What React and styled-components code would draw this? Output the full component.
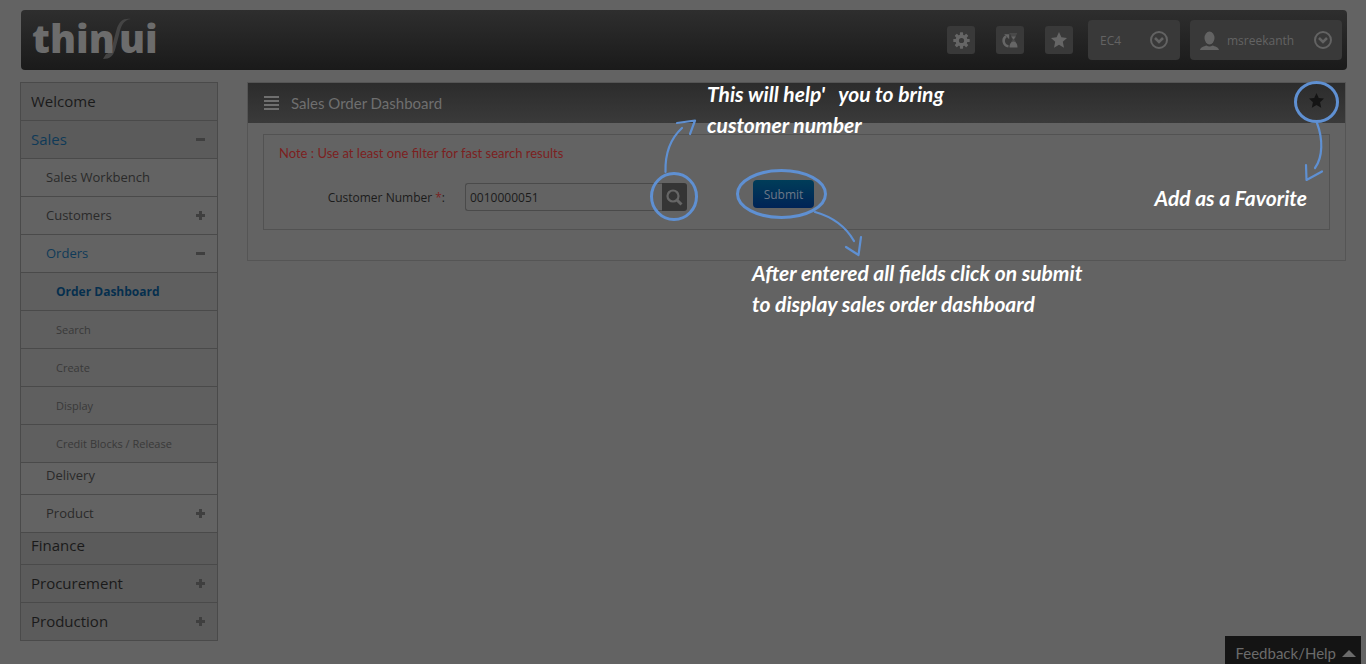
import React from "react";
import styled, { createGlobalStyle, css } from "styled-components";

const UI = '"Open Sans", "Noto Sans", sans-serif';
const HEADING = 'Lato, "Liberation Sans", sans-serif';
const INK = "#5f90d2";

const GlobalStyle = createGlobalStyle`
  * { box-sizing: border-box; }
  body { margin: 0; background: #636363; font-family: ${UI}; color: #1b1b1b; }
  button, input, select { font-family: inherit; }
  ul { list-style: none; margin: 0; padding: 0; }
`;

const Page = styled.div`
  padding: 10px 20px 20px;
`;

const TopBar = styled.header`
  display: flex;
  align-items: center;
  height: 60px;
  margin: 0 -1px 0 1px;
  padding: 0 5px 0 11px;
  border-radius: 4px;
  background: linear-gradient(#2e2e2e, #1a1a1a);
`;

const Logo = styled.a`
  display: flex;
  align-items: center;
  isolation: isolate;
  margin-right: auto;
  padding-bottom: 4px;
  color: #6c6c6c;
  font: 800 39px/44px ${UI};
  text-decoration: none;
`;

const Slash = styled.svg`
  z-index: -1;
  margin: 0 -12px;
`;

const IconGroup = styled.div`
  display: flex;
  gap: 21px;
  margin-right: 15px;
`;

const IconButton = styled.button`
  display: grid;
  place-items: center;
  width: 28px;
  height: 28px;
  padding: 0;
  border: 0;
  border-radius: 3px;
  background: #393939;
  color: #666;
`;

const Picker = styled.button`
  display: flex;
  align-items: center;
  gap: 8px;
  width: ${(p) => p.$width};
  height: 40px;
  margin-left: ${(p) => p.$gap || "0"};
  padding: 0 ${(p) => p.$pad};
  border: 0;
  border-radius: 4px;
  background: #393939;
  color: #636363;
  font-size: 12px;
`;

const PickerText = styled.span`
  margin-right: auto;
`;

const Columns = styled.div`
  display: flex;
  align-items: flex-start;
  gap: 29px;
  padding-top: 12px;
`;

const Sidebar = styled.nav`
  flex: 0 0 198px;
  border: 1px solid #4a4a4a;
  border-top: 0;
`;

const levels = {
  1: css`padding-left: 10px; font-size: 15px; color: #1a1a1a; background: #5b5b5b;`,
  2: css`padding-left: 25px; font-size: 13px; color: #2a2a2a; background: #636363;`,
  3: css`padding-left: 35px; font-size: 11px; color: #393939; background: #5f5f5f;`,
};

const NavLink = styled.a`
  display: flex;
  align-items: center;
  justify-content: space-between;
  height: ${(p) => (p.$short ? "32px" : "38px")};
  padding-right: 12px;
  padding-bottom: ${(p) => (p.$short ? "7px" : "1px")};
  border-top: 1px solid #4a4a4a;
  text-decoration: none;
  ${(p) => levels[p.$level]}
  ${(p) => p.$open && css`color: #0f3a58;`}
  ${(p) => p.$current && css`color: #062f4e; font-size: 12px; font-weight: 700;`}
`;

const Panel = styled.main`
  flex: 1;
  min-width: 0;
  border: 1px solid #555;
`;

const PanelHeader = styled.div`
  display: flex;
  align-items: center;
  gap: 12px;
  height: 40px;
  padding: 0 16px;
  background: linear-gradient(#2c2c2c, #3a3a3a);
  color: #6f6f6f;
`;

const PanelTitle = styled.h1`
  margin: 0 auto 0 0;
  font: 400 15px/24px ${HEADING};
`;

const StarButton = styled.button`
  display: grid;
  place-items: center;
  width: 24px;
  height: 24px;
  padding: 0 1px 6px 0;
  border: 0;
  background: none;
  color: #141414;
`;

const Filters = styled.form`
  margin: 11px 15px 30px;
  padding: 8px 15px 13px;
  border: 1px solid #525252;
`;

const Note = styled.p`
  margin: 0 0 15px;
  color: #7c1f1f;
  font: 400 13px/20px ${HEADING};
`;

const FieldRow = styled.div`
  display: flex;
  align-items: center;
  height: 38px;
`;

const Label = styled.label`
  width: 186px;
  padding-right: 20px;
  font-size: 12px;
  text-align: right;
`;

const Required = styled.span`
  color: #7c1f1f;
`;

const TextInput = styled.input`
  width: 197px;
  height: 28px;
  padding: 0 4px;
  border: 1px solid #4a4a4a;
  border-right: 0;
  border-radius: 3px 0 0 3px;
  background: #636363;
  color: #1b1b1b;
  font-size: 12px;
`;

const SearchButton = styled.button`
  display: grid;
  place-items: center;
  width: 25px;
  height: 28px;
  padding: 0;
  border: 0;
  border-radius: 0 3px 3px 0;
  background: #353535;
  color: #666;
`;

const SubmitButton = styled.button`
  width: 61px;
  height: 28px;
  padding: 0;
  border: 0;
  border-radius: 4px;
  background: linear-gradient(#003d59, #002356);
  color: #6d7887;
  font-size: 12px;
`;

/* Keeps a guide callout attached to the control it explains. */
const Anchor = styled.div`
  position: relative;
  display: flex;
  margin-left: ${(p) => p.$gap || "0"};
  padding-bottom: ${(p) => p.$lift || "0"};
`;

const Sketch = styled.svg`
  position: absolute;
  left: ${(p) => p.$x};
  top: ${(p) => p.$y};
  z-index: 2;
  fill: none;
  stroke: ${INK};
  stroke-linecap: round;
  stroke-linejoin: round;
  pointer-events: none;
`;

const Hint = styled.p`
  position: absolute;
  left: ${(p) => p.$x};
  right: ${(p) => p.$right};
  top: ${(p) => p.$y};
  z-index: 2;
  margin: 0;
  color: #fff;
  font: italic 700 21px/31px ${HEADING};
  white-space: pre;
  pointer-events: none;
`;

const Feedback = styled.button`
  position: fixed;
  right: 5px;
  bottom: 0;
  display: flex;
  align-items: center;
  gap: 6px;
  height: 28px;
  padding: 6px 5px 0 10px;
  border: 0;
  background: #141414;
  color: #6b6b6b;
  && { font: 400 15px/22px ${HEADING}; }
`;

const Star = ({ size }) => (
  <svg width={size} height={size} viewBox="0 0 16 16" fill="currentColor" aria-hidden="true">
    <path d="M8 0l2.4 5.3 5.6.6-4.2 3.900 1.200 5.900L8 12.800 3 15.700l1.200-5.900L0 5.900l5.600-.6z" />
  </svg>
);

const Gear = () => (
  <svg width="17" height="17" viewBox="0 0 17 17" aria-hidden="true">
    <circle cx="8.500" cy="8.500" r="4.300" fill="none" stroke="currentColor" strokeWidth="3.400" />
    <g fill="currentColor">
      {[0, 45, 90, 135, 180, 225, 270, 315].map((a) => (
        <rect key={a} x="6.900" y="0.300" width="3.200" height="3.600" rx="0.600" transform={`rotate(${a} 8.500 8.500)`} />
      ))}
    </g>
  </svg>
);

const History = () => (
  <svg width="16" height="16" viewBox="0 0 16 16" aria-hidden="true">
    <path d="M6.500 14.200C.8 13.800.4 6.400 4 4.400" fill="none" stroke="currentColor" strokeWidth="2.600" />
    <path d="M2.200 2.200h5v5z" fill="currentColor" />
    <path d="M7.500 1H15v1.500h-.8c0 3-1 4-2 5 1 1 2 2.200 2 5h.8V15H8v-2.500h.8c0-2.800 1-4 2-5-1-1-2-2-2-5H7.500z" fill="currentColor" opacity=".35" />
    <path d="M9.500 4.500h4L11.500 7.500zM7.500 15.500c0-4 1.500-5.500 4-6 2.500.5 4 2 4 6z" fill="currentColor" />
  </svg>
);

const Chevron = () => (
  <svg width="18" height="18" viewBox="0 0 18 18" fill="none" stroke="currentColor" strokeWidth="2" aria-hidden="true">
    <circle cx="9" cy="9" r="8" />
    <path d="M5 7l4 4 4-4" strokeWidth="2.500" />
  </svg>
);

const Person = () => (
  <svg width="19" height="19" viewBox="0 0 19 19" fill="currentColor" aria-hidden="true">
    <ellipse cx="9.500" cy="7" rx="5" ry="6.500" />
    <path d="M0 19c.5-3 4-3.500 6.500-4.500 2 1.200 4 1.200 6 0C15 15.500 18.500 16 19 19z" />
  </svg>
);

const Lines = () => (
  <svg width="15" height="15" viewBox="0 0 15 15" stroke="currentColor" strokeWidth="2" aria-hidden="true">
    <path d="M0 1h15M0 5h15M0 9h15M0 13h15" />
  </svg>
);

const Toggle = ({ open }) => (
  <svg width="9" height="9" viewBox="0 0 9 9" stroke="#3f3f3f" strokeWidth="3" aria-hidden="true">
    <path d={open ? "M0 4.500h9" : "M0 4.500h9M4.500 0v9"} />
  </svg>
);

const Magnifier = () => (
  <svg width="17" height="17" viewBox="0 0 17 17" fill="none" stroke="currentColor" aria-hidden="true">
    <circle cx="7" cy="7" r="5.500" strokeWidth="2.200" />
    <path d="M11 11l4.500 4.500" strokeWidth="3" />
  </svg>
);

const menu = [
  { label: "Welcome", level: 1 },
  { label: "Sales", level: 1, toggle: true, open: true },
  { label: "Sales Workbench", level: 2 },
  { label: "Customers", level: 2, toggle: true },
  { label: "Orders", level: 2, toggle: true, open: true },
  { label: "Order Dashboard", level: 3, current: true },
  { label: "Search", level: 3 },
  { label: "Create", level: 3 },
  { label: "Display", level: 3 },
  { label: "Credit Blocks / Release", level: 3 },
  { label: "Delivery", level: 2, short: true },
  { label: "Product", level: 2, toggle: true },
  { label: "Finance", level: 1, short: true },
  { label: "Procurement", level: 1, toggle: true },
  { label: "Production", level: 1, toggle: true },
];

export default function App() {
  return (
    <Page>
      <GlobalStyle />
      <TopBar>
        <Logo href="#" aria-label="thin/ui">
          thin
          <Slash width="28" height="42" viewBox="0 0 28 42" aria-hidden="true">
            <path d="M28 2C20 3 18 9 16 18L12 33C10 39 7 42 0 42L3 37C8 36 9 30 11 22L14 11C17 4 20 1 28 2z" fill="#444" />
          </Slash>
          ui
        </Logo>
        <IconGroup>
          <IconButton aria-label="Settings"><Gear /></IconButton>
          <IconButton aria-label="History"><History /></IconButton>
          <IconButton aria-label="Favorites"><Star size={16} /></IconButton>
        </IconGroup>
        <Picker $width="92px" $pad="12px"><PickerText>EC4</PickerText><Chevron /></Picker>
        <Picker $width="152px" $pad="10px" $gap="10px"><Person /><PickerText>msreekanth</PickerText><Chevron /></Picker>
      </TopBar>

      <Columns>
        <Sidebar aria-label="Main">
          <ul>
            {menu.map((item) => (
              <li key={item.label}>
                <NavLink href="#" $level={item.level} $short={item.short} $open={item.open} $current={item.current}>
                  {item.label}
                  {item.toggle && <Toggle open={item.open} />}
                </NavLink>
              </li>
            ))}
          </ul>
        </Sidebar>

        <Panel>
          <PanelHeader>
            <Lines />
            <PanelTitle>Sales Order Dashboard</PanelTitle>
            <Anchor>
              <StarButton aria-label="Add to favorites"><Star size={15} /></StarButton>
              <Sketch $x="-13px" $y="-12px" width="50" height="108" viewBox="0 0 50 108">
                <ellipse cx="24.500" cy="23" rx="21" ry="19.500" strokeWidth="3" />
                <path d="M25 44C31 60 31 78 23 89M14 86L14.500 101 30 92.500" strokeWidth="2.200" />
              </Sketch>
              <Hint $right="22px" $y="91px">Add as a Favorite</Hint>
            </Anchor>
          </PanelHeader>
          <Filters onSubmit={(e) => e.preventDefault()}>
            <Note>Note : Use at least one filter for fast search results</Note>
            <FieldRow>
              <Label htmlFor="customer">Customer Number <Required>*</Required>:</Label>
              <TextInput id="customer" defaultValue="0010000051" />
              <Anchor>
                <SearchButton type="button" aria-label="Find customer"><Magnifier /></SearchButton>
                <Sketch $x="-14px" $y="-65px" width="52" height="104" viewBox="0 0 52 104">
                  <ellipse cx="26" cy="78.500" rx="22.500" ry="23" strokeWidth="3" />
                  <path d="M17.500 54C17 36 22 21 34 10M29 5L47 2.500 42 16" strokeWidth="2.200" />
                </Sketch>
                <Hint $x="45px" $y="-105px">{"This will help'   you to bring\ncustomer number"}</Hint>
              </Anchor>
              <Anchor $gap="66px" $lift="6px">
                <SubmitButton type="submit">Submit</SubmitButton>
                <Sketch $x="-18px" $y="-12px" width="130" height="92" viewBox="0 0 130 92">
                  <ellipse cx="46.500" cy="26" rx="44" ry="23.500" strokeWidth="3" />
                  <path d="M80 44C98 49 111 59 119 73M111 79L123.500 87 126 69" strokeWidth="2.200" />
                </Sketch>
                <Hint $x="-1px" $y="77px">{"After entered all fields click on submit\nto display sales order dashboard"}</Hint>
              </Anchor>
            </FieldRow>
          </Filters>
        </Panel>
      </Columns>

      <Feedback>
        Feedback/Help
        <svg width="14" height="7" viewBox="0 0 14 7" fill="currentColor" aria-hidden="true"><path d="M7 0l7 7H0z" /></svg>
      </Feedback>
    </Page>
  );
}
